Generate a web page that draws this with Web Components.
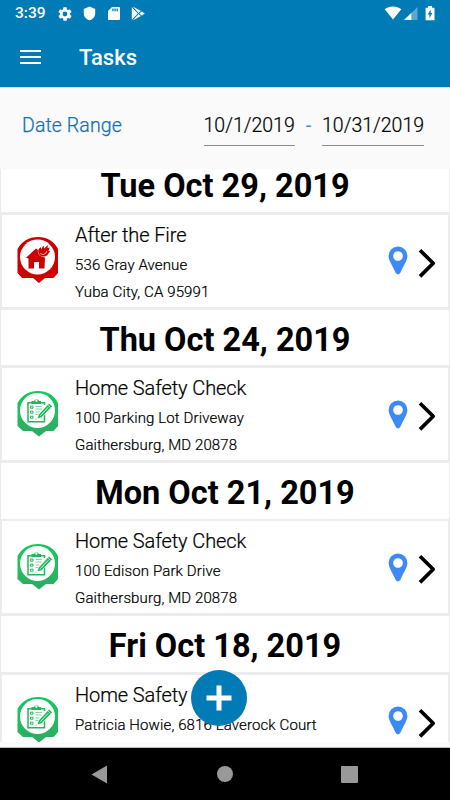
<!DOCTYPE html>
<html lang="en">
<head>
<meta charset="utf-8">
<title>Tasks</title>
<style>
html,body{margin:0;height:100%;background:#fafafa;font-family:Roboto,"Liberation Sans",sans-serif}
</style>
</head>
<body>
<tasks-screen></tasks-screen>
<script>
function define(name, html) {
  const template = document.createElement('template');
  template.innerHTML = html;
  customElements.define(name, class extends HTMLElement {
    constructor() {
      super();
      this.attachShadow({mode: 'open'}).append(template.content.cloneNode(true));
    }
  });
}

define('status-bar', `
<style>
:host{display:flex;align-items:center;height:27px;padding:0 15px;color:#fff;font-size:15.5px;font-weight:500;line-height:27px}
.time{width:42px}
svg{display:block;fill:#fff}
.spacer{flex:1}
</style>
<span class="time">3:39</span>
<svg width="16" height="16" viewBox="0 0 24 24" style="margin-right:9px"><path d="M19.4 13c.04-.3.06-.6.06-1s-.02-.7-.06-1l2.1-1.6c.2-.2.3-.4.1-.7l-2-3.400c-.1-.2-.4-.3-.6-.2l-2.500 1a7 7 0 0 0-1.700-1L14.400 2.400c0-.2-.2-.4-.5-.4H10c-.3 0-.5.2-.5.4l-.4 2.700a7 7 0 0 0-1.700 1l-2.500-1c-.2-.1-.5 0-.6.2l-2 3.400c-.1.3 0 .5.1.7L4.600 11a8 8 0 0 0 0 2l-2.100 1.600c-.2.2-.2.5-.1.7l2 3.400c.1.2.4.3.6.2l2.500-1a7 7 0 0 0 1.700 1l.4 2.700c0 .2.2.4.5.4h3.900c.3 0 .5-.2.5-.4l.4-2.700a7 7 0 0 0 1.700-1l2.500 1c.2.1.5 0 .6-.2l2-3.400c.1-.2.1-.5-.1-.7zM12 15.600A3.600 3.600 0 1 1 12 8.400a3.600 3.600 0 0 1 0 7.200z"/></svg>
<svg width="14" height="15" viewBox="0 0 14 15" style="margin-right:12px"><path d="M7.500 .5L13.200 3v4.500c0 3.200-2.300 5.900-5.700 6.800C4.100 13.400 1.800 10.700 1.800 7.500V3z"/></svg>
<svg width="12" height="15" viewBox="0 0 12 15" style="margin-right:11px"><path fill-rule="evenodd" d="M4 1h7a1 1 0 0 1 1 1v11a1 1 0 0 1-1 1H1a1 1 0 0 1-1-1V5zM4.300 2.500v2.800h1.300V2.500zm2.100 0v2.800h1.300V2.500zm2.100 0v2.800h1.300V2.500z"/></svg>
<svg width="15" height="15" viewBox="0 0 15 15"><path d="M.8 1v13L6.900 7.500z" opacity=".95"/><path d="M1.700.6l8.300 4.500-2.400 1.800zM1.700 14.400l8.300-4.500-2.400-1.800zM10.800 5.500l3 2-3 2-2.600-2z"/><path d="M1.500 1.500l8 8M1.500 13.500l8-8" stroke="#007bb6" stroke-width=".7" fill="none"/></svg>
<span class="spacer"></span>
<svg width="18" height="15" viewBox="0 0 18 15" style="margin-right:2px"><path d="M.7 3.200C5.500-.3 12.500-.3 17.300 3.200L9 13.500z"/></svg>
<svg width="14" height="15" viewBox="0 0 14 15" style="margin-right:7px"><path d="M13.500 1v13H0z" opacity=".35"/><path d="M7.300 7v7H0z"/></svg>
<svg width="10" height="15" viewBox="0 0 10 15"><path fill-rule="evenodd" d="M3 0h4v1.700h2q.5 0 .5.600v11.400q0 .6-.5.600H1.200q-.6 0-.6-.6V2.300q0-.6.6-.6H3zM5.700 3.500L2.700 8.500h1.800v3.800L7.400 7H5.700z"/></svg>
`);

define('app-bar', `
<style>
:host{display:block;height:88px;background:#007bb6;border-bottom:1px solid #cfe2ee;box-sizing:border-box;flex:none}
.row{display:flex;align-items:center;height:60px;padding-left:20px;color:#fff}
svg{display:block;width:21px;height:16px;fill:#fff}
h1{margin:2px 0 0 38px;font-size:22px;font-weight:500;line-height:30px}
</style>
<status-bar></status-bar>
<div class="row"><svg viewBox="0 0 21 16"><path d="M0 1h21v2H0zM0 7h21v2H0zM0 13h21v2H0z"/></svg><h1><slot></slot></h1></div>
`);

define('date-field', `
<style>
:host{display:block;box-sizing:border-box;height:33px;border-bottom:1.500px solid #8c8c8c;font-size:19.500px;line-height:25px;color:#000;font-weight:300;-webkit-text-stroke:.2px #000;white-space:nowrap}
</style><slot></slot>`);

define('date-range', `
<style>
:host{display:flex;height:81px;padding:25px 26px 0 22px;box-sizing:border-box;background:#fafafa;flex:none;font-size:19.500px;line-height:25px;color:#1370b5}
.label{flex:1;font-weight:300;letter-spacing:.1px;-webkit-text-stroke:.25px #1370b5}
.dash{width:27px;text-align:center;opacity:.8}
.from{width:91.500px}.to{width:102px}
</style>
<span class="label">Date Range</span><date-field class="from">10/1/2019</date-field><span class="dash">-</span><date-field class="to">10/31/2019</date-field>
`);

define('day-heading', `
<style>
:host{display:block;box-sizing:border-box;height:55.600px;padding-top:13px;margin:0 1px 2.900px;background:#fff;text-align:center;font-size:32.500px;font-weight:700;line-height:34px;color:#000;white-space:nowrap}
</style><slot></slot>`);

define('fire-badge', `
<style>:host{display:block}svg{display:block}</style>
<svg width="42" height="48" viewBox="0 0 42 48"><path fill="#cc0202" d="M21 1C30 1 37 5 41 13V37L36.500 42H28L22 47 16 42H5L.5 37V13C5 5 12 1 21 1z"/><circle cx="20.500" cy="21" r="17.500" fill="#fff"/>
<g fill="#cc0202"><path d="M9 21.800L19 12.500 21 14C20 18 23 21 28 21.500L27.500 32.500H22V26H17V32.500H11.500V22.500z"/><path d="M21.500 17C20.500 14 22 12.500 24 11L24 13.500 26.500 9.500 27.200 12.500 31 9 30.500 12 32.700 11.500 31.500 15 33 15 30.500 19C27 22 22.500 20.500 21.500 17z"/></g>
<path d="M23.500 17.500C26 19.500 29 18 30 15" fill="none" stroke="#fff" stroke-width=".8"/></svg>`);

define('check-badge', `
<style>:host{display:block}svg{display:block}</style>
<svg width="42" height="48" viewBox="0 0 42 48"><defs><linearGradient id="g" x2="0" y2="1"><stop stop-color="#11c85c"/><stop offset=".55" stop-color="#23bd5d"/><stop offset="1" stop-color="#30a765"/></linearGradient></defs>
<path fill="url(#g)" d="M21 1C30 1 37 5 41 13V36L36.500 41H29L22 46.500 15 41H6L.5 36V13C5 5 12 1 21 1z"/><circle cx="20.500" cy="20.500" r="17.500" fill="#fff"/>
<g fill="none" stroke="#20b85c" stroke-width="1.500"><path d="M15 12.700H11V31.800H27.500V24M23 12.700H27.500V15"/><path d="M13.500 16.200h2.500v2h-2.500zM13.500 21.200h2.500v2h-2.500zM13.500 26.200h2.500v2h-2.500z" stroke-width="1"/><path d="M18.500 16.500H25M18.500 19H25M18.500 22H22.500M18.500 24.500H21M18.500 29H20" stroke-width=".8" opacity=".7"/></g>
<path fill="#20b85c" fill-rule="evenodd" d="M14.500 11H17A2.700 2.700 0 0 1 22 11H24V14H14.500zM19.400 9.500a1.100 1.100 0 1 0 .01 0z"/><path fill="#20b85c" stroke="#fff" stroke-width=".7" d="M20 29L21.500 24.500 32 13.200 35.500 16.300 24.700 27.500z"/><path d="M30.500 14.500L33.500 17.500" stroke="#fff" stroke-width=".6"/><path d="M23.300 25.700L31.200 17.300" stroke="#fff" stroke-width=".8"/></svg>`);

define('task-row', `
<style>
:host{display:flex;box-sizing:border-box;height:92px;margin:0 2px 2.900px;padding:6px 12.500px 0 15px;background:#fff;color:#000}
.icon{width:58px;padding-top:15.500px}
.text{flex:1;white-space:nowrap;font-weight:300;min-width:0;color:#000;-webkit-text-stroke:.22px #000}
.title{font-size:20px;line-height:28px;letter-spacing:-.1px}
.sub{font-size:15px;line-height:27px;letter-spacing:.12px}
.first{margin-top:3px}
svg{display:block}
.pin{margin:25.600px 9.500px 0 0}
.arrow{margin-top:27px}
</style>
<div class="icon"><slot name="icon"></slot></div>
<div class="text"><div class="title"><slot name="title"></slot></div><div class="sub first"><slot name="line1"></slot></div><div class="sub"><slot name="line2"></slot></div></div>
<svg class="pin" width="20" height="29" viewBox="0 0 20 29"><path fill="#3d8af7" fill-rule="evenodd" d="M10 .5A9.400 9.400 0 0 1 19.400 10C19.400 14 16 19 12.500 26.500Q10 30.500 7.500 26.500C4 19 .6 14 .6 10A9.400 9.400 0 0 1 10 .5zM10 5.200a4.800 4.800 0 1 0 .01 0z"/></svg>
<svg class="arrow" width="18" height="30" viewBox="0 0 18 30"><path d="M2 2.200L15.200 15.300 2 28.400" fill="none" stroke="#000" stroke-width="3.700" stroke-linejoin="round" stroke-linecap="butt"/></svg>
`);

define('task-list', `
<style>
:host{display:block;height:573px;overflow:hidden;background:#ececec;flex:none}
.scroll{display:flex;flex-direction:column;margin-top:-12.800px}
::slotted(*){flex:none}
</style><div class="scroll"><slot></slot></div>`);

define('add-button', `
<style>
:host{position:absolute;left:191px;top:670px;width:56px;height:56px;border-radius:50%;background:#007bb6;display:grid;place-items:center}
svg{display:block}
</style><svg width="26" height="26" viewBox="0 0 26 26"><path d="M13 .5v25M.5 13h25" stroke="#fff" stroke-width="5"/></svg>`);

define('nav-bar', `
<style>
:host{display:flex;align-items:center;justify-content:space-between;height:53px;background:#000;border-top:1px solid #bbb;padding:0 92px 0 91px;box-sizing:border-box;margin-top:5px}
svg{display:block;fill:#999}
</style>
<svg width="17" height="19" viewBox="0 0 17 19"><path d="M16 .5v18L.5 9.500z"/></svg>
<svg width="16" height="16" viewBox="0 0 16 16"><circle cx="8" cy="8" r="8"/></svg>
<svg width="17" height="17" viewBox="0 0 17 17"><rect width="17" height="17" rx="1"/></svg>
`);

define('tasks-screen', `
<style>
:host{position:relative;display:flex;flex-direction:column;width:450px;height:800px;overflow:hidden;background:#fafafa}
</style>
<app-bar>Tasks</app-bar>
<date-range></date-range>
<task-list>
<day-heading>Tue Oct 29, 2019</day-heading>
<task-row><fire-badge slot="icon"></fire-badge><span slot="title">After the Fire</span><span slot="line1">536 Gray Avenue</span><span slot="line2">Yuba City, CA 95991</span></task-row>
<day-heading>Thu Oct 24, 2019</day-heading>
<task-row><check-badge slot="icon"></check-badge><span slot="title">Home Safety Check</span><span slot="line1">100 Parking Lot Driveway</span><span slot="line2">Gaithersburg, MD 20878</span></task-row>
<day-heading>Mon Oct 21, 2019</day-heading>
<task-row><check-badge slot="icon"></check-badge><span slot="title">Home Safety Check</span><span slot="line1">100 Edison Park Drive</span><span slot="line2">Gaithersburg, MD 20878</span></task-row>
<day-heading>Fri Oct 18, 2019</day-heading>
<task-row><check-badge slot="icon"></check-badge><span slot="title">Home Safety Check</span><span slot="line1">Patricia Howie, 6816 Laverock Court</span></task-row>
</task-list>
<nav-bar></nav-bar>
<add-button></add-button>
`);
</script>
</body>
</html>
